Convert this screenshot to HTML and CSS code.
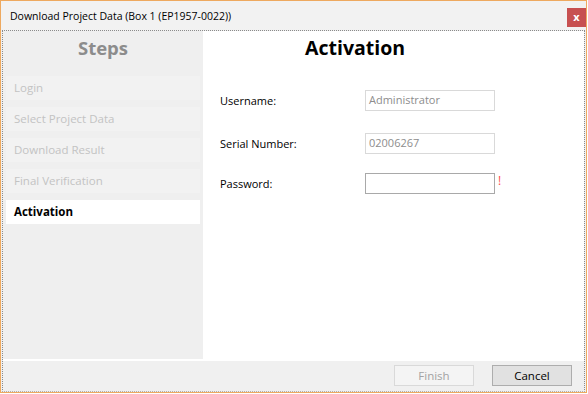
FILE: index.html
```html
<!DOCTYPE html>
<html>
<head>
<meta charset="utf-8">
<link rel="stylesheet" href="styles.css">
</head>
<body>
<div class="window">
  <div class="titlebar">
    <span class="title">Download Project Data (Box 1 (EP1957-0022))</span>
    <span class="close">x</span>
  </div>
  <div class="client">
    <div class="main">
      <div class="sidebar">
        <div class="steps-head">Steps</div>
        <div class="steps">
          <div class="step">Login</div>
          <div class="step">Select Project Data</div>
          <div class="step">Download Result</div>
          <div class="step">Final Verification</div>
          <div class="step active">Activation</div>
        </div>
      </div>
      <div class="panel">
        <div class="panel-head">Activation</div>
        <div class="form">
          <div class="row r1">
            <span class="label">Username:</span>
            <span class="input disabled">Administrator</span>
          </div>
          <div class="row r2">
            <span class="label">Serial Number:</span>
            <span class="input disabled">02006267</span>
          </div>
          <div class="row r3">
            <span class="label">Password:</span>
            <span class="input"></span>
            <span class="warn">!</span>
          </div>
        </div>
      </div>
    </div>
    <div class="footer">
      <span class="btn disabled">Finish</span>
      <span class="btn cancel">Cancel</span>
    </div>
  </div>
</div>
</body>
</html>
```
FILE: styles.css
```css
html, body {
  margin: 0;
  padding: 0;
  background: #ffffff;
}
body {
  width: 588px;
  height: 394px;
  overflow: hidden;
  font-family: "Open Sans", "Noto Sans", sans-serif;
}
.window {
  box-sizing: border-box;
  width: 587px;
  height: 393px;
  border: 1px solid #eea95f;
  background: #f0f0f0;
  display: flex;
  flex-direction: column;
}
.titlebar {
  height: 29px;
  flex: none;
  display: flex;
  align-items: center;
  justify-content: space-between;
  padding-left: 9px;
  background: #f2f2f2;
}
.title {
  font-size: 10.5px;
  color: #000;
  margin-top: 1px;
}
.close {
  width: 19px;
  height: 19px;
  background: #c75050;
  color: #fff;
  font-size: 11px;
  font-weight: bold;
  display: flex;
  align-items: center;
  justify-content: center;
  line-height: 1;
  margin-top: 3px;
  padding-bottom: 2px;
  box-sizing: border-box;
}
.client {
  flex: 1;
  display: flex;
  flex-direction: column;
  margin: 0 1px;
  border: 1px dotted #8a8a8a;
  border-bottom-color: #b0b0b0;
  min-height: 0;
}
.main {
  flex: 1;
  display: flex;
  background: #ffffff;
  min-height: 0;
}
.sidebar {
  width: 200px;
  flex: none;
  background: #efefef;
  margin-bottom: 2px;
}
.steps-head {
  text-align: center;
  font-size: 18.5px;
  font-weight: bold;
  color: #8c8c8c;
  height: 41px;
  line-height: 34px;
}
.steps {
  display: flex;
  flex-direction: column;
  gap: 7px;
  padding-top: 4px;
  padding-left: 3px;
}
.step {
  height: 24px;
  width: 194px;
  line-height: 24px;
  padding-left: 8px;
  box-sizing: border-box;
  font-size: 11.5px;
  color: #c3c3c3;
  background: #f2f2f2;
}
.step.active {
  background: #ffffff;
  color: #000;
  font-weight: bold;
}
.panel {
  flex: 1;
  background: #ffffff;
}
.panel-head {
  font-size: 19.5px;
  font-weight: bold;
  color: #000;
  height: 40px;
  line-height: 34px;
  padding-left: 102px;
}
.form {
  padding-left: 17px;
  padding-top: 19px;
}
.row {
  display: flex;
  align-items: center;
  height: 21px;
}
.r2 { margin-top: 22px; }
.r3 { margin-top: 19px; }
.label {
  width: 145px;
  font-size: 11px;
  color: #000;
}
.input {
  box-sizing: border-box;
  width: 130px;
  height: 21px;
  border: 1px solid #a9a9a9;
  background: #fff;
  font-size: 11px;
  color: #8d8d8d;
  padding-left: 3px;
  line-height: 17px;
}
.input.disabled {
  border-color: #d9d9d9;
}
.warn {
  color: #ff4d4d;
  font-size: 12px;
  margin-left: 3px;
  margin-top: -6px;
}
.footer {
  height: 30px;
  flex: none;
  background: #f0f0f0;
  display: flex;
  justify-content: flex-end;
  align-items: flex-start;
  gap: 18px;
  padding-right: 12px;
  padding-top: 4px;
  box-sizing: border-box;
}
.btn {
  box-sizing: border-box;
  width: 80px;
  height: 21px;
  display: flex;
  align-items: center;
  justify-content: center;
  font-size: 11.5px;
  border: 1px solid #adadad;
  background: #e1e1e1;
  color: #000;
}
.btn.disabled {
  border-color: #d9d9d9;
  background: #f4f4f4;
  color: #a3a3a3;
}
```
